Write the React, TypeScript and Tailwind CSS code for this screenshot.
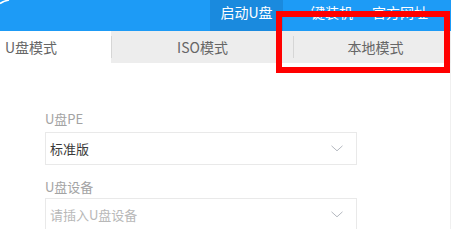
const FONT = { fontFamily: '"Noto Sans CJK SC", "Microsoft YaHei", "Noto Sans", sans-serif' };

function Chevron() {
  return (
    <svg width="12" height="7" viewBox="0 0 12 7" className="shrink-0">
      <path d="M0.5 0.8 L6 5.8 L11.5 0.8" fill="none" stroke="#b4b8bf" strokeWidth="1" />
    </svg>
  );
}

function Select({ value, placeholder }: { value?: string; placeholder?: string }) {
  return (
    <div className="flex h-[33px] w-[312px] items-center justify-between border border-[#e9e9e9] pl-[4px] pr-[13px]">
      <span className={`text-[13px] leading-none ${value ? 'text-[#3a3a3a]' : 'text-[#b8b8b8]'}`}>
        {value ?? placeholder}
      </span>
      <Chevron />
    </div>
  );
}

export default function App() {
  return (
    <div className="relative h-[229px] w-[451px] overflow-hidden bg-white" style={FONT}>
      {/* header */}
      <div className="relative flex h-[31px] bg-[#1d9bf6] text-[14px] text-white">
        <svg width="14" height="6" viewBox="0 0 14 6" className="absolute left-0 top-0">
          <path d="M0 3.5 Q4 1 9 0" fill="none" stroke="white" strokeWidth="1.6" />
        </svg>
        <div className="w-[210px]" />
        <div className="flex w-[73px] items-start justify-center bg-[#1a8ade] pt-[2px]">启动U盘</div>
        <div className="flex w-[84px] items-start justify-center pt-[2px]">一键装机</div>
        <div className="flex w-[66px] items-start justify-center pt-[2px]">官方网址</div>
      </div>

      {/* tabs */}
      <div className="flex h-[32px] bg-[#ededed] text-[14px] text-[#666]">
        <div className="flex w-[111px] items-center bg-white pl-[5px]">U盘模式</div>
        <div className="flex w-[182px] items-center">
          <div className="h-[22px] w-px bg-[#d6d6d6]" />
          <div className="flex-1 text-center">ISO模式</div>
        </div>
        <div className="flex flex-1 items-center">
          <div className="h-[22px] w-px bg-[#d6d6d6]" />
          <div className="flex-1 pl-[6px] text-center">本地模式</div>
        </div>
      </div>

      {/* body */}
      <div className="flex flex-col pl-[45px] pt-[47px]">
        <div className="mb-[4px] text-[13px] leading-[18px] text-[#a3a3a3]">U盘PE</div>
        <Select value="标准版" />
        <div className="mb-[2px] mt-[13px] text-[13px] leading-[18px] text-[#a3a3a3]">U盘设备</div>
        <Select placeholder="请插入U盘设备" />
      </div>

      <div className="absolute right-0 top-[63px] h-[166px] w-px bg-[#f0f0f0]" />

      {/* highlight box */}
      <div className="absolute left-[276px] top-[11px] h-[62px] w-[174px] border-[6px] border-[#ff0000]" />
    </div>
  );
}
